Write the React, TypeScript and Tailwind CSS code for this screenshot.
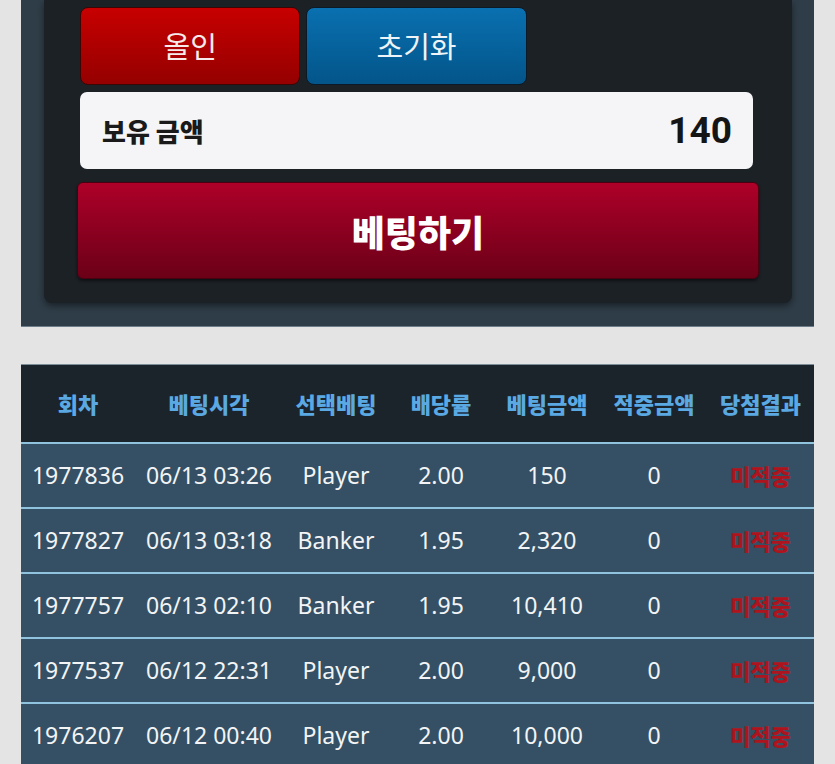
import React from "react";

const rows = [
  ["1977836", "06/13 03:26", "Player", "2.00", "150", "0"],
  ["1977827", "06/13 03:18", "Banker", "1.95", "2,320", "0"],
  ["1977757", "06/13 02:10", "Banker", "1.95", "10,410", "0"],
  ["1977537", "06/12 22:31", "Player", "2.00", "9,000", "0"],
  ["1976207", "06/12 00:40", "Player", "2.00", "10,000", "0"],
];

const heads = ["회차", "베팅시각", "선택베팅", "배당률", "베팅금액", "적중금액", "당첨결과"];
const widths = ["w-[114px]", "w-[148px]", "w-[106px]", "w-[104px]", "w-[108px]", "w-[106px]", "w-[107px]"];

export default function App() {
  return (
    <div
      className="min-h-[764px] w-[835px] overflow-hidden bg-[#e4e4e4]"
      style={{ fontFamily: '"Noto Sans", "Noto Sans CJK KR", sans-serif' }}
    >
      {/* top panel */}
      <div className="mx-[21px] bg-[#2f3d48] px-[22px] pb-[23px] pl-[23px] border-b border-[#6d7d89]">
        <div className="rounded-b-[8px] bg-[#1c2126] px-[33px] pt-[7px] pb-[24px] shadow-[0_3px_6px_rgba(0,0,0,0.45)]">
          <div className="pl-[3px] pr-[6px]">
            <div className="grid grid-cols-3 gap-[6px]">
              <button className="h-[78px] rounded-[8px] border border-[#3a0606] bg-gradient-to-b from-[#c70000] to-[#950000] text-[29px] text-[#f6eaea] leading-none">
                올인
              </button>
              <button className="h-[78px] rounded-[8px] border border-[#0b1a26] bg-gradient-to-b from-[#0a70b0] to-[#03558a] text-[29px] text-[#eef4f8] leading-none">
                초기화
              </button>
              <div />
            </div>
            <div className="mt-[7px] flex h-[77px] items-center justify-between rounded-[7px] bg-[#f5f5f7] pl-[22px] pr-[21px]">
              <span className="text-[26px] font-black text-[#1a1a1a]" style={{ fontFamily: '"Noto Sans CJK KR", sans-serif' }}>
                보유 금액
              </span>
              <span className="text-[37px] font-bold text-[#151515]" style={{ fontFamily: 'Roboto, sans-serif' }}>
                140
              </span>
            </div>
          </div>
          <button
            className="mt-[13px] flex h-[97px] w-full items-center justify-center rounded-[6px] border border-[#4a0010] bg-gradient-to-b from-[#ae0029] to-[#6b0017] text-[36px] font-black text-white shadow-[0_2px_3px_rgba(0,0,0,0.5)]"
            style={{ fontFamily: '"Noto Sans CJK KR", sans-serif' }}
          >
            베팅하기
          </button>
        </div>
      </div>

      {/* table */}
      <div className="mx-[21px] mt-[37px] border-t border-[#7d8d98]">
        <table className="w-[793px] table-fixed border-collapse">
          <thead>
            <tr className="h-[78px] bg-[#1b232b] border-b-2 border-[#8fc3de]">
              {heads.map((h, i) => (
                <th
                  key={h}
                  className={`${widths[i]} text-center text-[22px] font-black text-[#5aa9e3]`}
                  style={{ fontFamily: '"Noto Sans CJK KR", sans-serif' }}
                >
                  {h}
                </th>
              ))}
            </tr>
          </thead>
          <tbody>
            {rows.map((r, ri) => (
              <tr key={ri} className="h-[65px] bg-[#355064] border-b-2 border-[#8fc3de]">
                {r.map((c, ci) => (
                  <td key={ci} className="text-center text-[23px] text-[#f2f4f6] whitespace-nowrap">
                    {c}
                  </td>
                ))}
                <td
                  className="text-center text-[22px] font-black text-[#ae141e]"
                  style={{ fontFamily: '"Noto Sans CJK KR", sans-serif' }}
                >
                  미적중
                </td>
              </tr>
            ))}
          </tbody>
        </table>
      </div>
    </div>
  );
}
